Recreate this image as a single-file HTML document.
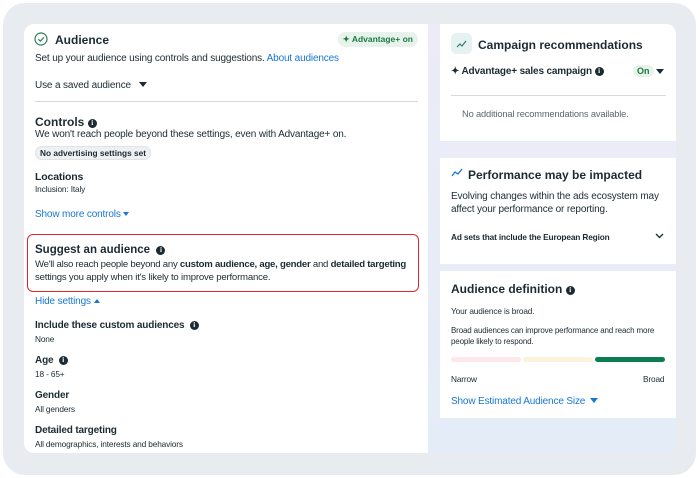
<!DOCTYPE html>
<html><head><style>
*{box-sizing:border-box;margin:0;padding:0}
body{width:700px;height:478px;background:#fff;font-family:"Liberation Sans",sans-serif;color:#1c2b33;position:relative;overflow:hidden}
.frame{position:absolute;left:3px;top:3px;width:693px;height:472px;border-radius:22px;background:#e8ecf1}
.inner{position:absolute;left:24px;top:24px;width:652px;height:429px;border-radius:10px;background:linear-gradient(180deg,#ecebf7,#e4edf7);overflow:hidden}
.left{position:absolute;left:0;top:0;width:404px;height:429px;background:#fff}
.card{position:absolute;left:416px;width:236px;background:#fff}
.abs{position:absolute;white-space:nowrap}
.t{font-size:12px;font-weight:bold}
.s{font-size:10px;letter-spacing:-0.15px}
.xs{font-size:8.3px;letter-spacing:-0.15px}
.b{color:#1877d2}
.info{display:inline-block;width:9px;height:9px;border-radius:50%;background:#1c2b33;color:#fff;font-size:7px;font-weight:bold;text-align:center;line-height:9px;vertical-align:1px;font-family:"Liberation Serif",serif;letter-spacing:0}
.tri{display:inline-block;border-left:4px solid transparent;border-right:4px solid transparent;border-top:5px solid #1c2b33;vertical-align:1px}
</style></head><body>
<div class="frame"></div>
<div class="inner">
 <div class="left">
  <svg class="abs" style="left:10px;top:8px" width="14" height="14"><circle cx="7" cy="7" r="6" fill="none" stroke="#2e7d5b" stroke-width="1.2"/><path d="M4.3 7.2l2 2 3.6-3.8" fill="none" stroke="#2e7d5b" stroke-width="1.2"/></svg>
  <div class="abs t" style="left:31px;top:9px">Audience</div>
  <div class="abs" style="right:10px;top:8px;background:#e6f2ea;color:#1e7a47;font-size:8.5px;font-weight:bold;padding:2px 5px;border-radius:8px">✦ Advantage+ on</div>
  <div class="abs s" style="left:11px;top:29px">Set up your audience using controls and suggestions. <span class="b">About audiences</span></div>
  <div class="abs s" style="left:11px;top:56px">Use a saved audience &nbsp;&nbsp;<span class="tri"></span></div>
  <div class="abs" style="left:11px;top:77px;width:383px;height:1px;background:#d6dadf"></div>
  <div class="abs t" style="left:11px;top:91px">Controls <span class="info">i</span></div>
  <div class="abs s" style="left:11px;top:105px">We won't reach people beyond these settings, even with Advantage+ on.</div>
  <div class="abs" style="left:11px;top:122px;background:#eef0f3;border:1px solid #dfe2e6;border-radius:8px;font-size:8.3px;font-weight:bold;padding:1px 4px">No advertising settings set</div>
  <div class="abs s" style="left:11px;top:147px;font-weight:bold;font-size:10.5px">Locations</div>
  <div class="abs xs" style="left:11px;top:160px">Inclusion: Italy</div>
  <div class="abs s b" style="left:11px;top:185px">Show more controls <span class="tri" style="border-top-color:#1877d2;border-width:4px 3px 0"></span></div>
  <div class="abs" style="left:3px;top:210px;width:392px;height:58px;border:1.5px solid #e0242b;border-radius:6px"></div>
  <div class="abs t" style="left:11px;top:220px;font-size:11.5px">Suggest an audience &nbsp;<span class="info">i</span></div>
  <div class="abs s" style="left:11px;top:235px;font-size:9.6px;letter-spacing:-0.25px">We'll also reach people beyond any <b>custom audience, age, gender</b> and <b>detailed targeting</b></div>
  <div class="abs s" style="left:11px;top:248px;font-size:9.6px;letter-spacing:-0.2px">settings you apply when it's likely to improve performance.</div>
  <div class="abs s b" style="left:11px;top:272px">Hide settings <span class="tri" style="border-top:none;border-bottom:4px solid #1877d2;border-width:0 3px 4px"></span></div>
  <div class="abs s" style="left:11px;top:296px;font-weight:bold">Include these custom audiences &nbsp;<span class="info">i</span></div>
  <div class="abs xs" style="left:11px;top:310px">None</div>
  <div class="abs s" style="left:11px;top:331px;font-weight:bold">Age &nbsp;<span class="info">i</span></div>
  <div class="abs xs" style="left:11px;top:345px">18 - 65+</div>
  <div class="abs s" style="left:11px;top:366px;font-weight:bold">Gender</div>
  <div class="abs xs" style="left:11px;top:380px">All genders</div>
  <div class="abs s" style="left:11px;top:401px;font-weight:bold">Detailed targeting</div>
  <div class="abs xs" style="left:11px;top:415px">All demographics, interests and behaviors</div>
 </div>
 <div class="card" style="top:0;height:117px">
  <div class="abs" style="left:11px;top:9px;width:21px;height:21px;background:#e5f2f1;border-radius:5px"><svg width="21" height="21"><path d="M6 14l3-3 2 2 4-5" fill="none" stroke="#2a7d74" stroke-width="1.2"/></svg></div>
  <div class="abs t" style="left:38px;top:14px">Campaign recommendations</div>
  <div class="abs s" style="left:11px;top:42px;font-weight:bold">✦ Advantage+ sales campaign <span class="info">i</span></div>
  <div class="abs" style="left:193px;top:41px;background:#e6f2ea;color:#1e7a47;font-size:9px;font-weight:bold;padding:1px 4px;border-radius:7px">On</div>
  <div class="abs" style="left:216px;top:45px;width:0;height:0;border-left:4px solid transparent;border-right:4px solid transparent;border-top:5px solid #1c2b33"></div>
  <div class="abs" style="left:11px;top:71px;width:215px;height:1px;background:#d6dadf"></div>
  <div class="abs xs" style="left:22px;top:85px;color:#5b676f;font-size:9.3px">No additional recommendations available.</div>
 </div>
 <div class="card" style="top:134px;height:106px">
  <svg class="abs" style="left:11px;top:10px" width="12" height="10"><path d="M1 8l3-4 3 2 4-5" fill="none" stroke="#1877d2" stroke-width="1.3"/></svg>
  <div class="abs t" style="left:28px;top:10px">Performance may be impacted</div>
  <div class="abs s" style="left:11px;top:33px">Evolving changes within the ads ecosystem may</div>
  <div class="abs s" style="left:11px;top:46px">affect your performance or reporting.</div>
  <div class="abs xs" style="left:11px;top:74px;font-weight:bold">Ad sets that include the European Region</div>
  <svg class="abs" style="left:215px;top:75px" width="9" height="6"><path d="M1 1l3.5 3.5L8 1" fill="none" stroke="#1c2b33" stroke-width="1.3"/></svg>
 </div>
 <div class="card" style="top:247px;height:147px">
  <div class="abs t" style="left:11px;top:11px">Audience definition <span class="info">i</span></div>
  <div class="abs xs" style="left:11px;top:35px">Your audience is broad.</div>
  <div class="abs xs" style="left:11px;top:55px;font-size:8px">Broad audiences can improve performance and reach more</div>
  <div class="abs xs" style="left:11px;top:66px;font-size:8px">people likely to respond.</div>
  <div class="abs" style="left:11px;top:86px;width:70px;height:5px;border-radius:3px;background:#fde7e9"></div>
  <div class="abs" style="left:83px;top:86px;width:70px;height:5px;border-radius:3px;background:#fdf3dc"></div>
  <div class="abs" style="left:155px;top:86px;width:70px;height:5px;border-radius:3px;background:#0b7d50"></div>
  <div class="abs xs" style="left:11px;top:103px">Narrow</div>
  <div class="abs xs" style="left:203px;top:103px">Broad</div>
  <div class="abs s b" style="left:11px;top:125px">Show Estimated Audience Size &nbsp;<span class="tri" style="border-top-color:#1877d2"></span></div>
 </div>
</div>
</body></html>
